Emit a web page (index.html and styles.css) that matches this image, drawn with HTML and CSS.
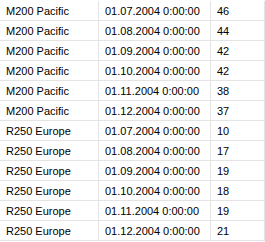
FILE: index.html
```html
<!DOCTYPE html>
<html lang="en">
<head>
<meta charset="UTF-8" />
<title>Sales grid</title>
<link rel="stylesheet" href="styles.css">
</head>
<body>
  <table class="grid">
    <tr><td class="name">M200 Pacific</td><td class="date">01.07.2004 0:00:00</td><td class="qty">46</td></tr>
    <tr><td class="name">M200 Pacific</td><td class="date">01.08.2004 0:00:00</td><td class="qty">44</td></tr>
    <tr><td class="name">M200 Pacific</td><td class="date">01.09.2004 0:00:00</td><td class="qty">42</td></tr>
    <tr><td class="name">M200 Pacific</td><td class="date">01.10.2004 0:00:00</td><td class="qty">42</td></tr>
    <tr><td class="name">M200 Pacific</td><td class="date">01.11.2004 0:00:00</td><td class="qty">38</td></tr>
    <tr><td class="name">M200 Pacific</td><td class="date">01.12.2004 0:00:00</td><td class="qty">37</td></tr>
    <tr><td class="name">R250 Europe</td><td class="date">01.07.2004 0:00:00</td><td class="qty">10</td></tr>
    <tr><td class="name">R250 Europe</td><td class="date">01.08.2004 0:00:00</td><td class="qty">17</td></tr>
    <tr><td class="name">R250 Europe</td><td class="date">01.09.2004 0:00:00</td><td class="qty">19</td></tr>
    <tr><td class="name">R250 Europe</td><td class="date">01.10.2004 0:00:00</td><td class="qty">18</td></tr>
    <tr><td class="name">R250 Europe</td><td class="date">01.11.2004 0:00:00</td><td class="qty">19</td></tr>
    <tr><td class="name">R250 Europe</td><td class="date">01.12.2004 0:00:00</td><td class="qty">21</td></tr>
  </table>
</body>
</html>
```
FILE: styles.css
```css
body{
  margin: 0;
  padding-top: 1px;
  background: #fff;
  font-family: "Liberation Sans", Arial, sans-serif;
  font-size: 11px;
  color: #000;
}

.grid{
  border-collapse: collapse;
  table-layout: fixed;
  width: 265px;
}

.grid td{
  height: 18px;
  padding: 1px 0 0 6px;
  border-bottom: 1px solid #e4e4e4;
  border-right: 1px solid #e4e4e4;
  white-space: nowrap;
  overflow: hidden;
}

.name{
  width: 92px;
}

.date{
  width: 105px;
  padding-left: 5px;
}

.qty{
  border-right: none;
  padding-left: 8px;
}
```
